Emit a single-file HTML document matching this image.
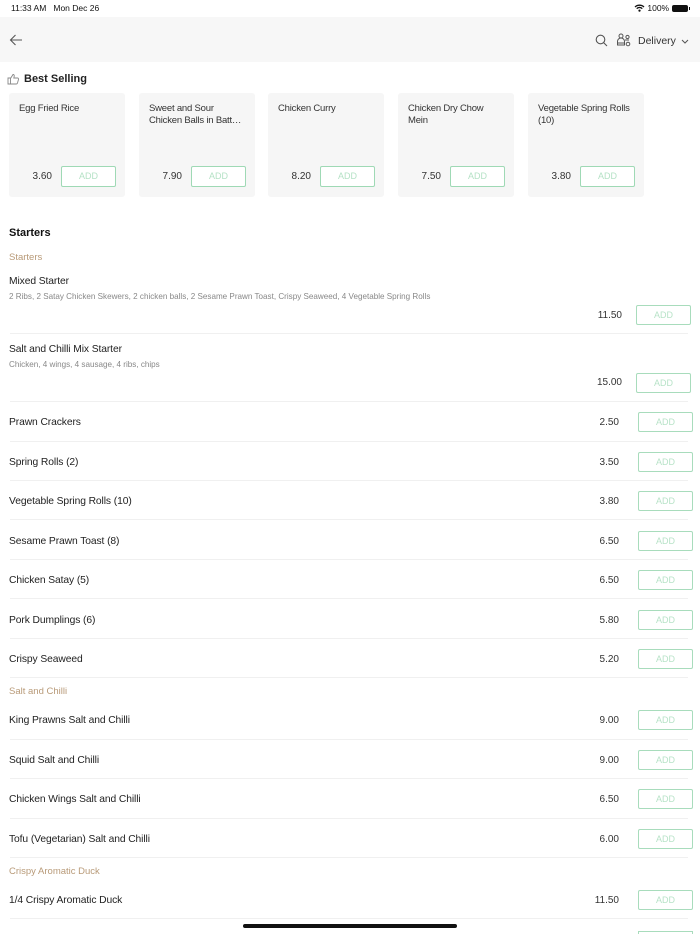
<!DOCTYPE html>
<html><head><meta charset="utf-8"><style>
*{margin:0;padding:0;box-sizing:border-box}
html,body{width:700px;height:934px;overflow:hidden}
body{background:#fff;font-family:"Liberation Sans",sans-serif;color:#222;position:relative}
.a{position:absolute;white-space:nowrap}
.hdr{position:absolute;left:0;top:17px;width:700px;height:45px;background:#f7f7f7}
.card{position:absolute;top:93px;width:116px;height:104px;background:#f6f6f6;border-radius:3px}
.card .t{position:absolute;left:10px;top:10px;font-size:9.5px;line-height:12px;color:#333;width:104px;letter-spacing:-0.2px}
.card .p{position:absolute;left:0;width:43px;text-align:right;top:78px;font-size:10px;color:#333}
.card .b{position:absolute;left:52px;top:73px;width:55px;height:21px;border:1px solid #9fd9b5;border-radius:2px;font-size:9px;color:#b5e2c6;text-align:center;line-height:19px;background:#fff}
.btn{position:absolute;width:55px;height:20px;border:1px solid #a8dcbc;border-radius:2px;font-size:9px;color:#b8e3c8;text-align:center;line-height:18px;background:#fff}
.nm{position:absolute;left:9px;font-size:10.3px;color:#222;white-space:nowrap;letter-spacing:-0.1px;margin-top:1px}
.pr{position:absolute;right:81px;font-size:10px;color:#333;white-space:nowrap;margin-top:1px}
.sep{position:absolute;left:10px;width:678px;height:1px;background:#f0f0f0}
.sec{position:absolute;left:9px;font-size:9.5px;color:#b89a78;white-space:nowrap;margin-top:1px}
.ds{position:absolute;left:9px;font-size:8.1px;color:#888;white-space:nowrap;margin-top:1px}
</style></head><body>
<div class="a" style="left:11px;top:3px;font-size:8.5px;color:#111">11:33 AM&nbsp;&nbsp; Mon Dec 26</div>
<div class="a" style="left:634px;top:3px;font-size:8.5px;color:#111">
<svg width="11" height="8" viewBox="0 0 11 8" style="vertical-align:-1px"><path d="M1 3a6.5 6.5 0 0 1 9 0M2.7 4.6a4 4 0 0 1 5.6 0" stroke="#111" stroke-width="1.3" fill="none"/><circle cx="5.5" cy="6.6" r="1.1" fill="#111"/></svg> 100%</div>
<div class="a" style="left:672px;top:5px;width:16px;height:7px;background:#111;border-radius:2px"></div>
<div class="a" style="left:689px;top:7px;width:1px;height:3px;background:#111"></div>
<div class="hdr"></div>
<svg class="a" style="left:9px;top:34px" width="14" height="12" viewBox="0 0 14 12"><path d="M13 6H1.5M6.5 1L1.5 6l5 5" stroke="#555" stroke-width="1.1" fill="none"/></svg>
<svg class="a" style="left:595px;top:34px" width="13" height="13" viewBox="0 0 13 13"><circle cx="5.5" cy="5.5" r="4.3" stroke="#555" stroke-width="1.1" fill="none"/><path d="M8.6 8.6L12 12" stroke="#555" stroke-width="1.1"/></svg>
<svg class="a" style="left:616px;top:33px" width="16" height="14" viewBox="0 0 16 14"><circle cx="5" cy="3" r="2" stroke="#555" fill="none"/><path d="M1.5 12V8.5a3.5 3.5 0 0 1 7 0V12zM1.5 10h7" stroke="#555" fill="none"/><circle cx="11.5" cy="4" r="1.6" stroke="#555" fill="none"/><circle cx="12" cy="11" r="1.8" stroke="#555" fill="none"/><path d="M9 7h4" stroke="#555"/></svg>
<div class="a" style="left:638px;top:35px;font-size:10.5px;color:#333">Delivery</div>
<svg class="a" style="left:681px;top:39px" width="8" height="5" viewBox="0 0 8 5"><path d="M1 1l3 3 3-3" stroke="#555" fill="none"/></svg>
<svg class="a" style="left:7px;top:73px" width="12" height="12" viewBox="0 0 12 12"><path d="M1 5h2.5v6H1zM3.5 5.5l2.5-4c1 0 1.4.8 1.2 1.8L6.8 5H10.5c.8 0 1.2.7 1 1.4l-1 3.6c-.2.6-.6 1-1.2 1H3.5" stroke="#888" stroke-width=".9" fill="none"/></svg>
<div class="a" style="left:24px;top:73px;font-size:11px;font-weight:bold;color:#222">Best Selling</div>
<div class="card" style="left:9px"><div class="t">Egg Fried Rice</div><div class="p">3.60</div><div class="b">ADD</div></div>
<div class="card" style="left:139px"><div class="t">Sweet and Sour<br>Chicken Balls in Batt…</div><div class="p">7.90</div><div class="b">ADD</div></div>
<div class="card" style="left:268px"><div class="t">Chicken Curry</div><div class="p">8.20</div><div class="b">ADD</div></div>
<div class="card" style="left:398px"><div class="t">Chicken Dry Chow<br>Mein</div><div class="p">7.50</div><div class="b">ADD</div></div>
<div class="card" style="left:528px"><div class="t">Vegetable Spring Rolls<br>(10)</div><div class="p">3.80</div><div class="b">ADD</div></div>
<div class="a" style="left:9px;top:227px;font-size:11px;font-weight:bold;color:#111">Starters</div>
<div class="sec" style="top:251px">Starters</div>
<div class="nm" style="top:275px">Mixed Starter</div>
<div class="ds" style="top:291px">2 Ribs, 2 Satay Chicken Skewers, 2 chicken balls, 2 Sesame Prawn Toast, Crispy Seaweed, 4 Vegetable Spring Rolls</div>
<div class="pr" style="top:309px;right:78px">11.50</div>
<div class="btn" style="left:636px;top:305px">ADD</div>
<div class="sep" style="top:333px"></div>
<div class="nm" style="top:343px">Salt and Chilli Mix Starter</div>
<div class="ds" style="top:359px">Chicken, 4 wings, 4 sausage, 4 ribs, chips</div>
<div class="pr" style="top:376px;right:78px">15.00</div>
<div class="btn" style="left:636px;top:373px">ADD</div>
<div class="sep" style="top:401px"></div>

<div class="nm" style="top:416px">Prawn Crackers</div><div class="pr" style="top:416px">2.50</div><div class="btn" style="left:638px;top:412px">ADD</div><div class="sep" style="top:441px"></div>
<div class="nm" style="top:456px">Spring Rolls (2)</div><div class="pr" style="top:456px">3.50</div><div class="btn" style="left:638px;top:452px">ADD</div><div class="sep" style="top:480px"></div>
<div class="nm" style="top:495px">Vegetable Spring Rolls (10)</div><div class="pr" style="top:495px">3.80</div><div class="btn" style="left:638px;top:491px">ADD</div><div class="sep" style="top:519px"></div>
<div class="nm" style="top:535px">Sesame Prawn Toast (8)</div><div class="pr" style="top:535px">6.50</div><div class="btn" style="left:638px;top:531px">ADD</div><div class="sep" style="top:559px"></div>
<div class="nm" style="top:574px">Chicken Satay (5)</div><div class="pr" style="top:574px">6.50</div><div class="btn" style="left:638px;top:570px">ADD</div><div class="sep" style="top:598px"></div>
<div class="nm" style="top:614px">Pork Dumplings (6)</div><div class="pr" style="top:614px">5.80</div><div class="btn" style="left:638px;top:610px">ADD</div><div class="sep" style="top:638px"></div>
<div class="nm" style="top:653px">Crispy Seaweed</div><div class="pr" style="top:653px">5.20</div><div class="btn" style="left:638px;top:649px">ADD</div><div class="sep" style="top:677px"></div>
<div class="sec" style="top:685px">Salt and Chilli</div>
<div class="nm" style="top:714px">King Prawns Salt and Chilli</div><div class="pr" style="top:714px">9.00</div><div class="btn" style="left:638px;top:710px">ADD</div><div class="sep" style="top:739px"></div>
<div class="nm" style="top:754px">Squid Salt and Chilli</div><div class="pr" style="top:754px">9.00</div><div class="btn" style="left:638px;top:750px">ADD</div><div class="sep" style="top:778px"></div>
<div class="nm" style="top:793px">Chicken Wings Salt and Chilli</div><div class="pr" style="top:793px">6.50</div><div class="btn" style="left:638px;top:789px">ADD</div><div class="sep" style="top:818px"></div>
<div class="nm" style="top:833px">Tofu (Vegetarian) Salt and Chilli</div><div class="pr" style="top:833px">6.00</div><div class="btn" style="left:638px;top:829px">ADD</div><div class="sep" style="top:857px"></div>
<div class="sec" style="top:865px">Crispy Aromatic Duck</div>
<div class="nm" style="top:894px">1/4 Crispy Aromatic Duck</div><div class="pr" style="top:894px">11.50</div><div class="btn" style="left:638px;top:890px">ADD</div><div class="sep" style="top:918px"></div>
<div class="a" style="left:638px;top:931px;width:55px;height:3px;border:1px solid #a8dcbc;border-bottom:none"></div>
<div class="a" style="left:243px;top:924px;width:214px;height:4px;border-radius:2px;background:#111"></div>
</body></html>
